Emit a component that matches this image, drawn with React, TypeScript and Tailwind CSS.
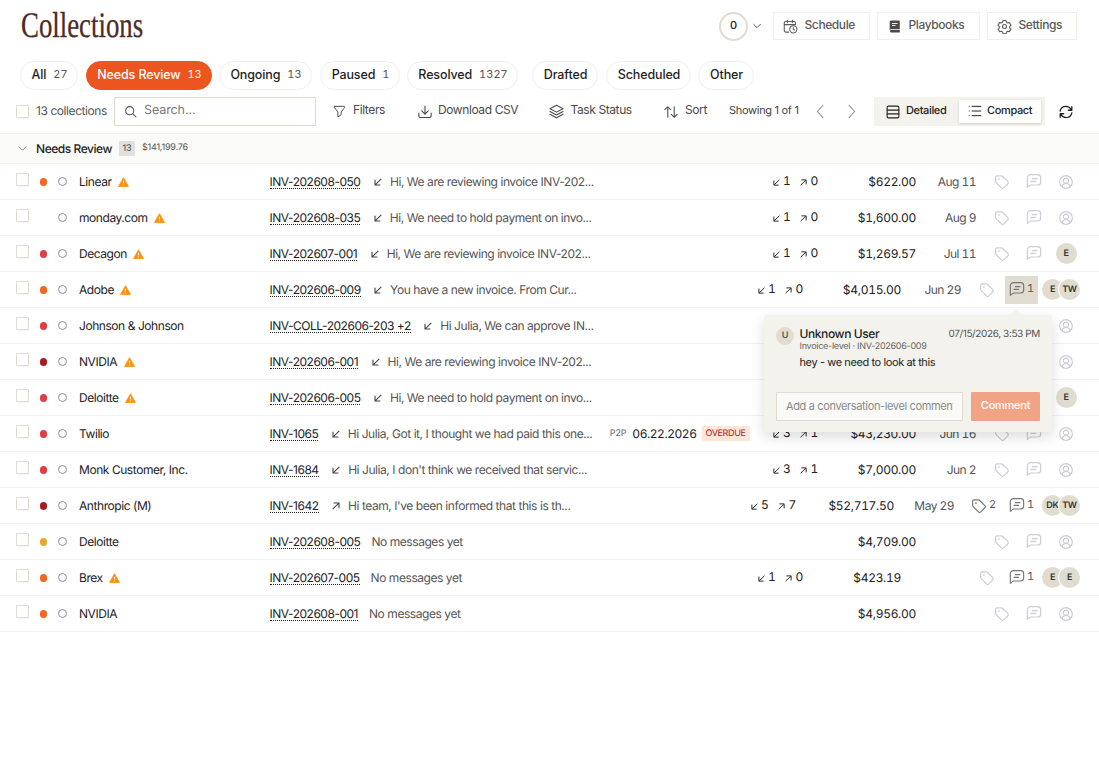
import type { ReactNode } from "react";
import { clsx } from "clsx";

interface Row {
  name: string;
  dot?: string;
  warn?: boolean;
  invoice: string;
  dir?: "in" | "out";
  message: string;
  p2p?: string;
  counts?: [number, number];
  amount: string;
  date?: string;
  tags?: number;
  comments?: number;
  active?: boolean;
  people?: string[];
}

const ORANGE = "bg-[#f26522]";
const RED = "bg-[#e13d45]";
const DARK = "bg-[#a81c1f]";
const YELLOW = "bg-[#e5a92b]";

const rows: Row[] = [
  { name: "Linear", dot: ORANGE, warn: true, invoice: "INV-202608-050", dir: "in", message: "Hi, We are reviewing invoice INV-202...", counts: [1, 0], amount: "$622.00", date: "Aug 11" },
  { name: "monday.com", warn: true, invoice: "INV-202608-035", dir: "in", message: "Hi, We need to hold payment on invo...", counts: [1, 0], amount: "$1,600.00", date: "Aug 9" },
  { name: "Decagon", dot: RED, warn: true, invoice: "INV-202607-001", dir: "in", message: "Hi, We are reviewing invoice INV-202...", counts: [1, 0], amount: "$1,269.57", date: "Jul 11", people: ["E"] },
  { name: "Adobe", dot: ORANGE, warn: true, invoice: "INV-202606-009", dir: "in", message: "You have a new invoice. From Cur...", counts: [1, 0], amount: "$4,015.00", date: "Jun 29", comments: 1, active: true, people: ["E", "TW"] },
  { name: "Johnson & Johnson", dot: RED, invoice: "INV-COLL-202606-203 +2", dir: "in", message: "Hi Julia, We can approve IN...", amount: "" },
  { name: "NVIDIA", dot: DARK, warn: true, invoice: "INV-202606-001", dir: "in", message: "Hi, We are reviewing invoice INV-202...", amount: "" },
  { name: "Deloitte", dot: RED, warn: true, invoice: "INV-202606-005", dir: "in", message: "Hi, We need to hold payment on invo...", amount: "", people: ["E"] },
  { name: "Twilio", dot: RED, invoice: "INV-1065", dir: "in", message: "Hi Julia, Got it, I thought we had paid this one...", p2p: "06.22.2026", counts: [3, 1], amount: "$43,230.00", date: "Jun 16" },
  { name: "Monk Customer, Inc.", dot: RED, invoice: "INV-1684", dir: "in", message: "Hi Julia, I don't think we received that servic...", counts: [3, 1], amount: "$7,000.00", date: "Jun 2" },
  { name: "Anthropic (M)", dot: DARK, invoice: "INV-1642", dir: "out", message: "Hi team, I've been informed that this is th...", counts: [5, 7], amount: "$52,717.50", date: "May 29", tags: 2, comments: 1, people: ["DK", "TW"] },
  { name: "Deloitte", dot: YELLOW, invoice: "INV-202608-005", message: "No messages yet", amount: "$4,709.00" },
  { name: "Brex", dot: ORANGE, warn: true, invoice: "INV-202607-005", message: "No messages yet", counts: [1, 0], amount: "$423.19", comments: 1, people: ["E", "E"] },
  { name: "NVIDIA", dot: ORANGE, invoice: "INV-202608-001", message: "No messages yet", amount: "$4,956.00" },
];

interface SvgProps {
  className?: string;
  size?: number;
  width?: number;
  children: ReactNode;
}

function Svg({ className, size = 16, width = 1.5, children }: SvgProps) {
  return (
    <svg
      width={size}
      height={size}
      viewBox="0 0 24 24"
      fill="none"
      stroke="currentColor"
      strokeWidth={width}
      strokeLinecap="round"
      strokeLinejoin="round"
      className={clsx("shrink-0", className)}
    >
      {children}
    </svg>
  );
}

function Arrow({ dir, size = 8, className }: { dir: "in" | "out"; size?: number; className?: string }) {
  return (
    <svg width={size} height={size} viewBox="0 0 8 8" fill="none" stroke="currentColor" strokeWidth="1.1" className={clsx("shrink-0", className)}>
      {dir === "in" ? <path d="M7.3.9 1.4 6.6M1 1.8V7h5.4" /> : <path d="M.7 7.1 6.6 1.4M1.6 1H7v5.2" />}
    </svg>
  );
}

function TagIcon({ className }: { className?: string }) {
  return (
    <Svg size={16} width={1.8} className={clsx("mt-px", className)}>
      <path d="M2.500 4.800v6.400c0 .6.2 1.200.7 1.700l8 8c1 1 2.500 1 3.500 0l6-6c1-1 1-2.500 0-3.500l-8-8c-.5-.5-1-.7-1.700-.7H4.600c-1.200 0-2.100.9-2.100 2.100z" />
      <path d="M7.300 7.700h.1" strokeWidth="2.500" />
    </Svg>
  );
}

function CommentIcon({ className }: { className?: string }) {
  return (
    <Svg size={16} width={1.7} className={className}>
      <path d="M2 21V7A4.500 4.500 0 0 1 6.500 2.500h11A4.500 4.500 0 0 1 22 7v6.500A4.500 4.500 0 0 1 17.500 18H7.500c-1 0-1.600.3-2.200 1L2 21.500z" />
      <path d="M7.500 12.500h7M9.500 8.500h7" />
    </Svg>
  );
}

function UserIcon({ className }: { className?: string }) {
  return (
    <Svg size={16} width={1.7} className={className}>
      <circle cx="12" cy="12" r="9.500" />
      <circle cx="12" cy="10" r="3.800" />
      <path d="M6.300 19c.5-3 2.800-4.700 5.700-4.700s5.200 1.700 5.700 4.700" />
    </Svg>
  );
}

function Checkbox({ className }: { className?: string }) {
  return <span className={clsx("w-[13px] shrink-0 rounded-[1px] border border-[#e0ddd0] bg-white shadow-[0_1px_1px_rgba(0,0,0,0.05)]", className)} />;
}

function Avatar({ text, className }: { text: string; className?: string }) {
  return (
    <span className={clsx("flex size-[21px] shrink-0 items-center justify-center rounded-full bg-[#e0ddd0] text-[9px] font-semibold tracking-[-0.2px] text-[#333]", className)}>
      {text}
    </span>
  );
}

function Pill({ label, count, width, active }: { label: string; count?: string; width: string; active?: boolean }) {
  return (
    <button
      className={clsx(
        "flex h-[29px] shrink-0 items-center justify-center gap-[7px] rounded-full border pl-px text-[12.5px] font-medium tracking-[-0.13px]",
        width,
        active ? "border-[#ec5420] bg-[#ec5420] text-white" : "border-[#f1efe8] text-[#1f1f1f]",
      )}
    >
      <span className="mb-px">{label}</span>
      {count && <span className={clsx("mb-0.5 text-[11px] font-normal tracking-normal tabular-nums", active ? "text-white" : "text-[#555]")}>{count}</span>}
    </button>
  );
}

function HeaderButton({ icon, label, className }: { icon: ReactNode; label: string; className: string }) {
  return (
    <button className={clsx("flex h-7 items-center border border-[#f1efe8] pl-[9px] text-[12px] font-medium tracking-[-0.4px] text-[#5a5a5a]", className)}>
      {icon}
      <span className="-mt-0.5 ml-[6.5px]">{label}</span>
    </button>
  );
}

function ToolButton({ icon, label, className }: { icon: ReactNode; label: string; className: string }) {
  return (
    <button className={clsx("flex shrink-0 items-center gap-[7px] text-[12px] tracking-[-0.4px] text-[#4a4a4a]", className)}>
      {icon}
      <span className="-mt-[3px] whitespace-nowrap">{label}</span>
    </button>
  );
}

function CollectionRow({ row }: { row: Row }) {
  const people = row.people ?? [];
  return (
    <div className="flex h-9 items-center border-b border-[#f1f1f1] pl-4 pr-[17px] text-[12px] tracking-[-0.44px] text-[#222]">
      <Checkbox className="mb-1 h-[13px]" />
      <span className={clsx("ml-[11px] h-2 w-[7px] shrink-0 rounded-full", row.dot)} />
      <span className="ml-[11px] size-[9px] shrink-0 rounded-full border border-[#8e93a3]" />
      <div className="ml-[12px] flex w-[190.5px] shrink-0 items-center gap-[6.5px] whitespace-nowrap">
        <span>{row.name}</span>
        {row.warn && (
          <svg width="11" height="10" viewBox="0 0 11 10" className="mt-px">
            <path d="M5.500.7 10.500 9.500H.5z" fill="#ff9110" stroke="#ff9110" strokeWidth=".8" strokeLinejoin="round" />
            <path d="M5.500 3.700v2.700M5.500 7.400v1" stroke="#fff" />
          </svg>
        )}
      </div>
      <span className="shrink-0 border-b border-dotted border-[#222] leading-[13px] tracking-[-0.48px]">{row.invoice}</span>
      {row.dir && <Arrow dir={row.dir} className="ml-[13.5px] text-[#444]" />}
      <span className={clsx("whitespace-nowrap text-[#555]", row.dir ? "ml-2" : "ml-[11px]")}>{row.message}</span>
      <div className="ml-auto flex shrink-0 items-center tabular-nums">
        {row.p2p && (
          <div className="mr-[23px] flex items-center">
            <span className="text-[9px] tracking-[-0.3px] text-[#666]">P2P</span>
            <span className="ml-[6px] tracking-[-0.45px]">{row.p2p}</span>
            <span className="ml-[5px] flex h-[15px] w-12 items-center justify-center rounded-[1px] bg-[#fde5d8] text-[9px] tracking-[-0.35px] text-[#a81c1f]">OVERDUE</span>
          </div>
        )}
        {row.counts && (
          <div className="mb-px flex w-[50px] items-center">
            <Arrow dir="in" size={7} className="mt-0.5" />
            <span className="ml-[3.5px] w-[17px]">{row.counts[0]}</span>
            <Arrow dir="out" size={7} className="mt-0.5" />
            <span className="ml-[3.5px]">{row.counts[1]}</span>
          </div>
        )}
        <span className="w-[93.5px] text-right tracking-[-0.3px]">{row.amount}</span>
        <span className="w-[60px] text-right tracking-[-0.55px] text-[#555]">{row.date}</span>
        <div className={clsx("ml-[10px] flex items-center", row.tags ? "w-[39px] pl-[7px] text-[#777]" : "w-8 justify-center text-[#cbcdd4]")}>
          <TagIcon />
          {row.tags && <span className="mb-[3px] ml-[2px] text-[11px] text-[#555]">{row.tags}</span>}
        </div>
        {row.comments ? (
          <div className="flex w-[39px] pl-0.5 text-[#777]">
            <span className={clsx("flex h-7 w-[33px] items-center rounded-[1px] pl-1", row.active && "bg-[#e0ddd0]")}>
              <CommentIcon className="-mt-px" />
              <span className="mb-[3px] ml-[2px] text-[11px] text-[#555]">{row.comments}</span>
            </span>
          </div>
        ) : (
          <div className="flex w-8 justify-center text-[#cbcdd4]">
            <CommentIcon className="-mt-px" />
          </div>
        )}
        {people.length > 1 ? (
          <div className="flex w-10">
            <Avatar text={people[0]} />
            <Avatar text={people[1]} className="-ml-1 ring-1 ring-white" />
          </div>
        ) : (
          <div className="flex w-8 justify-center text-[#cbcdd4]">{people.length ? <Avatar text={people[0]} /> : <UserIcon />}</div>
        )}
      </div>
    </div>
  );
}

function CommentPopover() {
  return (
    <div className="absolute left-[764px] top-[315px] h-[117px] w-[288px] rounded bg-[#f4f2ec] px-3 pt-[11px] shadow-[0_5px_14px_rgba(0,0,0,0.14)]">
      <span className="absolute -top-[6px] left-[245px] h-[7px] w-[14px] bg-[#f4f2ec] [clip-path:polygon(50%_0,100%_100%,0_100%)]" />
      <div className="flex">
        <span className="mt-px flex size-[18px] items-center justify-center rounded-full bg-[#e0ddd0] text-[9px] font-medium text-[#444]">U</span>
        <div className="ml-[5.5px] flex-1">
          <div className="flex h-[15px] items-center justify-between">
            <span className="text-[12px] font-medium tracking-[-0.4px] text-[#222]">Unknown User</span>
            <span className="mt-px text-[10px] tracking-[-0.38px] text-[#555]">07/15/2026, 3:53 PM</span>
          </div>
          <p className="text-[9px] leading-[11px] tracking-[-0.27px] text-[#666]">Invoice-level · INV-202606-009</p>
          <p className="mt-[3px] text-[11px] leading-[14px] tracking-[-0.4px] text-[#222]">hey - we need to look at this</p>
        </div>
      </div>
      <div className="mt-[23px] flex gap-2">
        <input
          placeholder="Add a conversation-level comment"
          className="h-[29px] w-[187px] border border-[#e0ddd0] bg-[#fafaf8] px-[9px] pb-0.5 text-[11px] tracking-[-0.36px] placeholder:text-[#8a8a8a]"
        />
        <button className="h-[29px] w-[69px] rounded-[1px] bg-[#f1a385] pb-0.5 text-[11px] font-medium tracking-[-0.25px] text-white">Comment</button>
      </div>
    </div>
  );
}

export default function App() {
  return (
    <div className="relative h-[781px] w-[1099px] overflow-hidden bg-white font-[Inter,sans-serif] text-[#222] [text-rendering:geometricPrecision]">
      <header className="flex h-[52px] items-center pl-[21px] pr-[22px]">
        <h1 className="-mt-0.5 w-[122px] origin-left scale-x-[0.745] font-['Liberation_Serif',serif] text-[36px] leading-none text-[#4d2c27] [-webkit-text-stroke:0.3px_#4d2c27]">Collections</h1>
        <div className="ml-auto flex items-center">
          <span className="flex size-[29px] items-center justify-center rounded-full border-2 border-[#e0ddd0] pb-0.5 text-[11px] font-medium">0</span>
          <Svg size={10} width={2.4} className="ml-1 mr-[11px] text-[#555]">
            <path d="m4 8 8 8 8-8" />
          </Svg>
          <HeaderButton
            className="mr-[7px] w-[97px]"
            label="Schedule"
            icon={
              <Svg size={15} width={1.7}>
                <path d="M7 2v4M15 2v4M2 9h18M9 21H4.500A2.500 2.500 0 0 1 2 18.500v-12A2.500 2.500 0 0 1 4.500 4h13A2.500 2.500 0 0 1 20 6.500V9" />
                <circle cx="16.500" cy="16.500" r="5.800" />
                <path d="M16.500 13.500v3.200l2 1" />
              </Svg>
            }
          />
          <HeaderButton
            className="mr-[7px] w-[103px]"
            label="Playbooks"
            icon={
              <svg width="15" height="15" viewBox="0 0 15 15" className="shrink-0">
                <path d="M4 1.500h8a.8.8 0 0 1 .8.800v7.900H4.500A2 2 0 0 0 2.700 11V3A1.500 1.500 0 0 1 4 1.500zM4 11h8.800v2.500H4.200a1.200 1.200 0 0 1 0-2.500z" fill="#4a4a4a" />
                <path d="M5 4.500h5.500M5 6.500h3.500" stroke="#fff" strokeWidth=".9" />
              </svg>
            }
          />
          <HeaderButton
            className="w-[90px]"
            label="Settings"
            icon={
              <Svg size={15} width={1.7}>
                <circle cx="12" cy="12" r="3.200" />
                <path d="m9.500 2.500-.6 2.600-2.200 1.200-2.500-.8-2.500 4.300 2 1.900v2.600l-2 1.900 2.500 4.300 2.500-.8 2.200 1.200.6 2.600h5l.6-2.600 2.200-1.200 2.500.8 2.500-4.300-2-1.900v-2.600l2-1.900-2.500-4.300-2.500.8-2.200-1.200-.6-2.600z" />
              </Svg>
            }
          />
        </div>
      </header>

      <nav className="mt-[9px] flex gap-[7px] pl-5">
        <Pill label="All" count="27" width="w-[58px]" />
        <Pill label="Needs Review" count="13" width="ml-px w-[126px]" active />
        <Pill label="Ongoing" count="13" width="w-[93px]" />
        <Pill label="Paused" count="1" width="ml-px w-[80px]" />
        <Pill label="Resolved" count="1327" width="w-[111px]" />
        <Pill label="Drafted" width="ml-[7px] w-[66px]" />
        <Pill label="Scheduled" width="ml-px w-[85px]" />
        <Pill label="Other" width="w-[56px]" />
      </nav>

      <div className="mt-[7px] flex h-[29px] items-center pl-4">
        <Checkbox className="h-[13px]" />
        <span className="mb-px ml-[7px] w-[78px] whitespace-nowrap text-[12px] tracking-[-0.42px] text-[#555]">13 collections</span>
        <div className="flex h-[29px] w-[202px] shrink-0 items-center gap-[7px] border border-[#e0ddd0] pl-[9px]">
          <Svg size={13} width={1.9} className="text-[#555]">
            <circle cx="10.500" cy="10.500" r="7.500" />
            <path d="m16 16 6 6" />
          </Svg>
          <span className="text-[12.5px] tracking-[-0.1px] text-[#777]">Search...</span>
        </div>
        <ToolButton
          className="ml-[17px] w-[84.5px]"
          label="Filters"
          icon={
            <Svg size={13} width={1.8}>
              <path d="M3 2.500h18c1 0 1.200 1 .7 1.700L15 13v5l-6 4v-9L2.300 4.200C1.800 3.500 2 2.500 3 2.500z" />
            </Svg>
          }
        />
        <ToolButton
          className="w-[131.5px]"
          label="Download CSV"
          icon={
            <Svg size={14} width={1.9} className="-mr-[0.5px]">
              <path d="M12 2v13M6.500 10l5.500 5.500 5.500-5.500M1.500 14v5A2.500 2.500 0 0 0 4 21.500h16a2.500 2.500 0 0 0 2.500-2.500v-5" />
            </Svg>
          }
        />
        <ToolButton
          className="w-[115px]"
          label="Task Status"
          icon={
            <Svg size={15} width={1.7} className="-mr-[0.5px]">
              <path d="M12 2 1.500 7.500 12 13l10.500-5.500zM1.500 12 12 17.500 22.500 12M1.500 16.500 12 22l10.500-5.500" />
            </Svg>
          }
        />
        <ToolButton
          className="w-[65px]"
          label="Sort"
          icon={
            <Svg size={14} width={1.8}>
              <path d="M6.500 21V3M1.500 8l5-5 5 5M17.500 3v18M12.500 16l5 5 5-5" />
            </Svg>
          }
        />
        <span className="mb-0.5 w-[84px] whitespace-nowrap text-[11px] tracking-[-0.3px] text-[#444]">Showing 1 of 1</span>
        <Svg size={15} width={1.7} className="text-[#888]">
          <path d="M16 2 7 12l9 10" />
        </Svg>
        <Svg size={15} width={1.7} className="ml-4 mr-[15px] text-[#888]">
          <path d="m8 2 9 10-9 10" />
        </Svg>
        <div className="flex h-[29px] w-[171px] shrink-0 items-center bg-[#f4f2ec] text-[11px] font-medium tracking-[-0.36px]">
          <span className="flex w-[85px] items-center gap-[6px] pl-[12px]">
            <Svg size={14} width={1.9}>
              <rect x="2" y="2" width="20" height="20" rx="2" />
              <path d="M2 8.700h20M2 15.300h20" />
            </Svg>
            <span className="mb-0.5">Detailed</span>
          </span>
          <span className="-mt-px flex h-[23px] w-[82px] items-center gap-[5px] rounded-[1px] bg-white pl-[9px] shadow-[0_1px_3px_rgba(0,0,0,0.15)]">
            <Svg size={14} width={1.7}>
              <path d="M7 4h15M7 12h15M7 20h15M2 4h.1M2 12h.1M2 20h.1" />
            </Svg>
            <span className="mb-px">Compact</span>
          </span>
        </div>
        <Svg size={14} width={2.2} className="ml-[14px]">
          <path d="M2 10.500C3 5.500 7 2.500 12 2.500c4 0 7 2 9.500 6M22 3v6h-6M22 13.500c-1 5-5 8-10 8-4 0-7-2-9.500-6M2 21v-6h6" />
        </Svg>
      </div>

      <section className="mt-[7px]">
        <div className="flex h-[31px] items-center border-y border-[#f1f1ed] bg-[#fafaf8] pl-[17px]">
          <Svg size={11} width={2} className="text-[#7a7f8c]">
            <path d="m4 8 8 8 8-8" />
          </Svg>
          <span className="ml-2 text-[12px] font-medium tracking-[-0.45px]">Needs Review</span>
          <span className="ml-[7px] flex h-[15px] w-4 items-center justify-center rounded-[1px] bg-[#e0e0e0] text-[9px] text-[#444]">13</span>
          <span className="mb-px ml-[7px] text-[9px] tracking-[-0.22px] text-[#555]">$141,199.76</span>
        </div>
        {rows.map((row) => (
          <CollectionRow key={row.invoice} row={row} />
        ))}
      </section>

      <CommentPopover />
    </div>
  );
}
